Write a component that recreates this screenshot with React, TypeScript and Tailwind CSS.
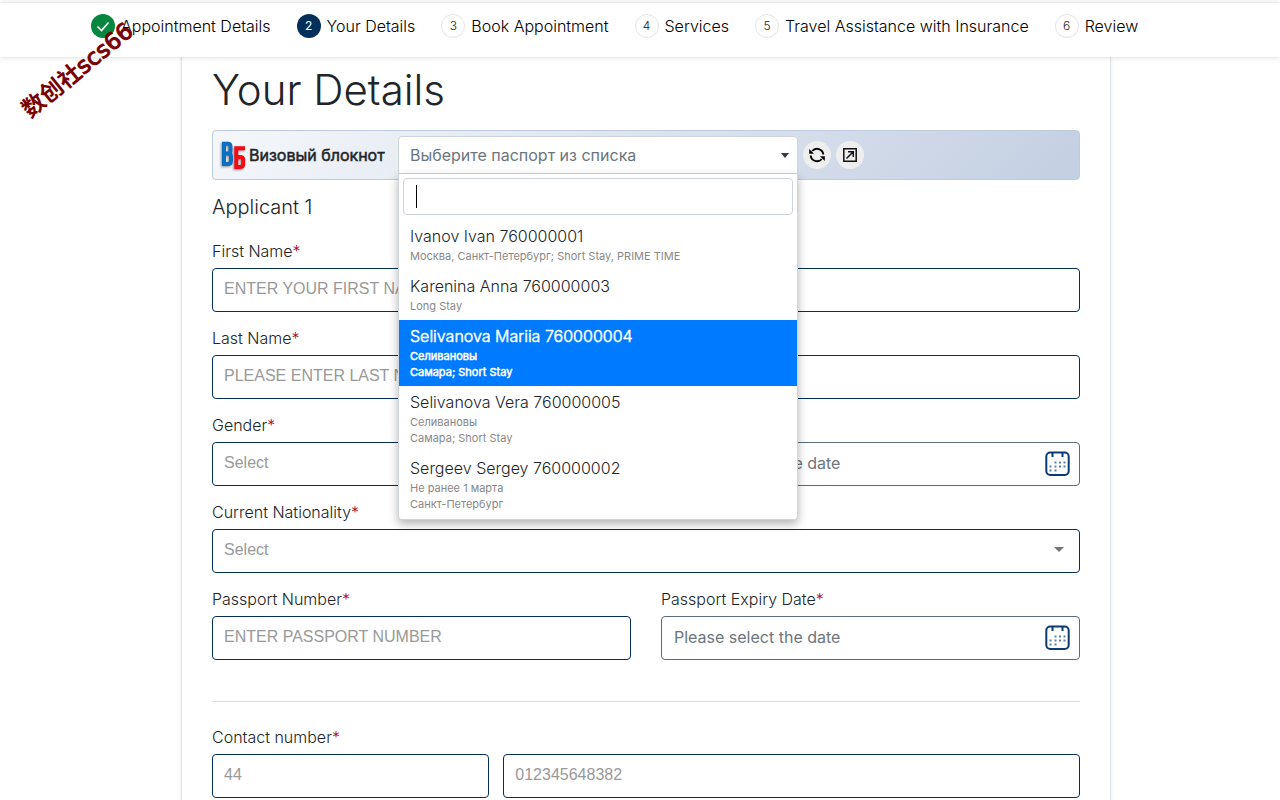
import React from "react";

const INPUT =
  "block h-11 w-full rounded border border-[#03305a] bg-white px-[11px] pb-0.5 font-['Liberation_Sans',Arial,sans-serif] text-base text-[#333] placeholder:text-[#999] outline-none";
const DATE =
  "block h-11 w-full rounded border border-[#5a6b7b] bg-white px-3 pb-0.5 text-base font-normal text-[#555f69] placeholder:text-[#6c757d] outline-none";

type Step = { label: string; state: "done" | "active" | "todo" };

const steps: Step[] = [
  { label: "Appointment Details", state: "done" },
  { label: "Your Details", state: "active" },
  { label: "Book Appointment", state: "todo" },
  { label: "Services", state: "todo" },
  { label: "Travel Assistance with Insurance", state: "todo" },
  { label: "Review", state: "todo" },
];

const passports = [
  { name: "Ivanov Ivan 760000001", notes: ["Москва, Санкт-Петербург; Short Stay, PRIME TIME"] },
  { name: "Karenina Anna 760000003", notes: ["Long Stay"] },
  { name: "Selivanova Mariia 760000004", notes: ["Селивановы", "Самара; Short Stay"] },
  { name: "Selivanova Vera 760000005", notes: ["Селивановы", "Самара; Short Stay"] },
  { name: "Sergeev Sergey 760000002", notes: ["Не ранее 1 марта", "Санкт-Петербург"] },
];
const highlighted = 2;

function StepBadge({ step, index }: { step: Step; index: number }) {
  if (step.state === "done") {
    return (
      <span className="flex size-6 items-center justify-center rounded-full bg-[#078640]">
        <svg viewBox="0 0 24 24" className="size-6" fill="none" stroke="white" strokeWidth="1.6">
          <path d="M6.500 12.500l4 4 7-8" />
        </svg>
      </span>
    );
  }
  return (
    <span
      className={
        step.state === "active"
          ? "flex size-6 items-center justify-center rounded-full bg-[#03305a] text-xs font-normal text-white"
          : "flex size-6 items-center justify-center rounded-full border border-[#e3e3e3] text-xs text-[#222]"
      }
    >
      {index + 1}
    </span>
  );
}

function Stepper() {
  return (
    <header className="relative z-10 mt-[3px] bg-white shadow-[0_0_5px_rgba(0,0,0,0.18)]">
      <ol className="flex h-[54px] items-start gap-[26px] pt-[11px] pl-[91px] whitespace-nowrap text-black">
        {steps.map((step, i) => (
          <li key={step.label} className="flex items-center gap-1.5">
            <StepBadge step={step} index={i} />
            <span>{step.label}</span>
          </li>
        ))}
      </ol>
    </header>
  );
}

function Label({ htmlFor, children }: { htmlFor: string; children: React.ReactNode }) {
  return (
    <label htmlFor={htmlFor} className="mb-[5px] block h-6 leading-6">
      {children}
      <span className="text-[#b0001e]">*</span>
    </label>
  );
}

function CalendarIcon() {
  const dots = [
    [10.5, 11.5], [15, 11.5], [19.5, 11.5],
    [5.5, 15.5], [10.5, 15.5], [15, 15.5], [19.5, 15.5],
    [5.5, 19.5], [10.5, 19.5],
  ];
  return (
    <svg viewBox="0 0 25 25" className="size-[25px]" fill="none" stroke="#0b3c6f" strokeWidth="2">
      <rect x="1.300" y="1.500" width="22.400" height="22.400" rx="4" />
      <path d="M7.500 1.500v4.500M17.500 1.500v4.500" />
      {dots.map(([x, y]) => (
        <rect key={`${x}-${y}`} x={x - 1} y={y - 1} width="2" height="2" fill="#5c81a8" stroke="none" />
      ))}
    </svg>
  );
}

function DateField({ id, label }: { id: string; label?: string }) {
  return (
    <div className="flex flex-col justify-end">
      {label && <Label htmlFor={id}>{label}</Label>}
      <div className="relative">
        <input id={id} aria-label={label ? undefined : "Date"} className={DATE} placeholder="Please select the date" />
        <button type="button" aria-label="Open calendar" className="absolute top-[9px] right-[10px]">
          <CalendarIcon />
        </button>
      </div>
    </div>
  );
}

function SelectField({ id, label }: { id: string; label: string }) {
  return (
    <div>
      <Label htmlFor={id}>{label}</Label>
      <div className="relative">
        <select id={id} className={`${INPUT} appearance-none text-[#999]`}>
          <option>Select</option>
        </select>
        <svg viewBox="0 0 10 5" className="pointer-events-none absolute top-[18px] right-4 h-[5px] w-[10px] fill-[#757575]">
          <path d="M0 0h10L5 5z" />
        </svg>
      </div>
    </div>
  );
}

function TextField({ id, label, placeholder }: { id: string; label: string; placeholder: string }) {
  return (
    <div>
      <Label htmlFor={id}>{label}</Label>
      <input id={id} className={INPUT} placeholder={placeholder} />
    </div>
  );
}

function Logo() {
  return (
    <svg viewBox="0 0 28 32" className="h-8 w-7 drop-shadow-[-1px_1px_1px_rgba(0,0,0,0.4)]" fill="none" strokeWidth="4">
      <path stroke="#0b6fc2" d="M4 4.800H9Q11.500 4.800 11.500 7.500V11.500Q11.500 14.500 9 14.500H5M9 14.500Q12 14.500 12 17.500V21.500Q12 25 9 25H4M5 2.800V27" />
      <path stroke="#f50a14" d="M26 9.300H17.300V28H21Q24.200 28 24.200 25V21Q24.200 18 21 18H17.500" />
    </svg>
  );
}

function PassportPicker() {
  return (
    <div className="relative w-[400px]">
      <button
        type="button"
        aria-haspopup="listbox"
        aria-expanded="true"
        className="flex h-[38px] w-full items-center justify-between rounded-t border border-[#ced4da] bg-white pr-2 pl-[11px] font-normal text-[#6c757d]"
      >
        Выберите паспорт из списка
        <svg viewBox="0 0 8 5" className="h-[5px] w-2 fill-[#343a40]">
          <path d="M0 0h8L4 5z" />
        </svg>
      </button>
      <div className="absolute inset-x-0 top-[38px] z-20 rounded-b border border-t-0 border-[#ced4da] bg-white pb-px shadow-[0_4px_10px_rgba(0,0,0,0.3)]">
        <div className="relative p-1">
          <input
            aria-label="Поиск паспорта"
            className="block h-[37px] w-full rounded border border-[#ced4da] px-3 outline-none"
          />
          <span className="absolute top-[11px] left-[17px] h-[23px] w-px bg-black" />
        </div>
        <ul role="listbox" aria-label="Паспорта" className="pt-px">
          {passports.map((p, i) => (
            <li
              key={p.name}
              role="option"
              aria-selected={i === highlighted}
              className={
                i === highlighted
                  ? "bg-[#007bff] px-[11px] pt-1 pb-1.5 text-white [-webkit-text-stroke:0.5px_white]"
                  : "px-[11px] pt-1 pb-1.5 text-[#212529]"
              }
            >
              <div className="leading-6">{p.name}</div>
              {p.notes.map((note) => (
                <div
                  key={note}
                  className={
                    i === highlighted
                      ? "text-[11px] leading-4 font-normal"
                      : "text-[11px] leading-4 font-normal text-[#888]"
                  }
                >
                  {note}
                </div>
              ))}
            </li>
          ))}
        </ul>
      </div>
    </div>
  );
}

function NotebookBar() {
  return (
    <div className="flex h-[50px] items-center rounded border border-[#bccbe2] bg-[linear-gradient(135deg,#f5f7fa_0%,#c3cfe2_100%)] pl-1.5">
      <Logo />
      <span className="ml-0.5 w-[149px] font-normal whitespace-nowrap text-[#212529] [-webkit-text-stroke:0.5px_#212529]">
        Визовый блокнот
      </span>
      <PassportPicker />
      <button type="button" aria-label="Обновить" className="ml-[5px] flex size-7 items-center justify-center rounded-full bg-[#eee]">
        <svg viewBox="0 0 18 18" className="size-[18px]" fill="none" stroke="black" strokeWidth="1.9">
          <path d="M4.200 5A6.300 6.300 0 0 1 15.300 8.500M13.800 13A6.300 6.300 0 0 1 2.700 9.500" />
          <path d="M1.200 3v4.800h4.800zM16.800 15v-4.800h-4.800z" fill="black" stroke="none" />
        </svg>
      </button>
      <button type="button" aria-label="Открыть" className="ml-[5px] flex size-7 items-center justify-center rounded-full bg-[#eee]">
        <svg viewBox="0 0 14 14" className="size-[14px]" fill="none" stroke="#111" strokeWidth="1.500">
          <path d="M.8.8h12.400v12.400H.8zM3.500 10.500l6.500-6.500M5 3.700h5.300V9" />
        </svg>
      </button>
    </div>
  );
}

export default function App() {
  return (
    <div className="relative h-screen overflow-hidden bg-white font-['Inter','Noto_Sans_CJK_SC',sans-serif] text-base font-light text-[#212529]">
      <Stepper />
      <div className="pl-3">
        <main className="mx-auto max-w-[930px] border-x border-[#dde3ea] px-[30px] pb-10 shadow-[0_0_4px_rgba(0,30,80,0.08)]">
          <h1 className="pt-2 text-[42px] leading-[50px] [font-weight:350]">Your Details</h1>
          <form className="mt-[15px]" onSubmit={(e) => e.preventDefault()}>
            <NotebookBar />
            <h2 className="mt-3 text-xl leading-[30px]">Applicant 1</h2>
            <div className="mt-[17px] flex flex-col gap-[14px]">
              <TextField id="first-name" label="First Name" placeholder="ENTER YOUR FIRST NAME" />
              <TextField id="last-name" label="Last Name" placeholder="PLEASE ENTER LAST NAME" />
              <div className="grid grid-cols-2 gap-[30px]">
                <SelectField id="gender" label="Gender" />
                <DateField id="date" />
              </div>
              <SelectField id="nationality" label="Current Nationality" />
              <div className="grid grid-cols-2 gap-[30px]">
                <TextField id="passport" label="Passport Number" placeholder="ENTER PASSPORT NUMBER" />
                <DateField id="expiry" label="Passport Expiry Date" />
              </div>
            </div>
            <hr className="mt-[41px] mb-[23px] border-[#e0e0e0]" />
            <Label htmlFor="contact">Contact number</Label>
            <div className="grid grid-cols-[277fr_576fr] gap-[14px]">
              <input aria-label="Country code" className={INPUT} placeholder="44" />
              <input id="contact" className={INPUT} placeholder="012345648382" />
            </div>
          </form>
        </main>
      </div>
      <div className="pointer-events-none absolute top-[53px] left-2.5 z-30 -rotate-[39deg] font-['DejaVu_Sans','Noto_Sans_CJK_SC',sans-serif] text-[23px] whitespace-nowrap text-[#7a0000]">
        <span className="font-bold">数创社</span>
        <span className="font-normal [-webkit-text-stroke:1px_#7a0000]">scs66</span>
      </div>
    </div>
  );
}
